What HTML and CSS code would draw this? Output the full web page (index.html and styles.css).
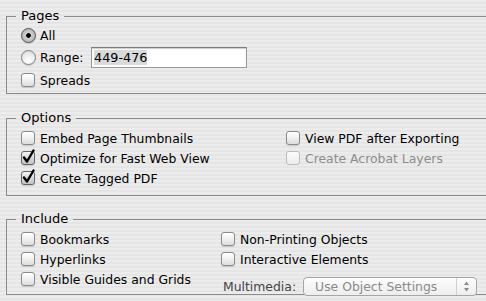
FILE: index.html
```html
<!DOCTYPE html>
<html lang="en">
<head>
    <meta charset="UTF-8">
    <meta name="viewport" content="width=device-width, initial-scale=1.0">
    <title>Export PDF - General</title>
    <link rel="stylesheet" href="styles.css">
</head>
<body>

    <fieldset class="panel panel-pages">
        <legend>Pages</legend>
        <div class="row row-all"><span class="radio on"></span>All</div>
        <div class="row row-range">
            <span class="radio"></span><span class="range-label">Range:</span>
            <span class="field"><span class="sel">449-476</span></span>
        </div>
        <div class="row row-spreads"><span class="box"></span>Spreads</div>
    </fieldset>

    <fieldset class="panel panel-options">
        <legend>Options</legend>
        <div class="cols cols-options">
            <div class="col">
                <div class="row"><span class="box"></span>Embed Page Thumbnails</div>
                <div class="row">
                    <span class="box on">
                        <svg viewBox="0 0 14 16" width="14" height="16"><path d="M3 8.5 L6 12.5 L12.5 1.5" fill="none" stroke="#000" stroke-width="2.4" stroke-linecap="round" stroke-linejoin="round"/></svg>
                    </span>Optimize for Fast Web View
                </div>
                <div class="row">
                    <span class="box on">
                        <svg viewBox="0 0 14 16" width="14" height="16"><path d="M3 8.5 L6 12.5 L12.5 1.5" fill="none" stroke="#000" stroke-width="2.4" stroke-linecap="round" stroke-linejoin="round"/></svg>
                    </span>Create Tagged PDF
                </div>
            </div>
            <div class="col">
                <div class="row"><span class="box"></span>View PDF after Exporting</div>
                <div class="row off"><span class="box"></span>Create Acrobat Layers</div>
            </div>
        </div>
    </fieldset>

    <fieldset class="panel panel-include">
        <legend>Include</legend>
        <div class="cols cols-include">
            <div class="col">
                <div class="row"><span class="box"></span>Bookmarks</div>
                <div class="row"><span class="box"></span>Hyperlinks</div>
                <div class="row"><span class="box"></span>Visible Guides and Grids</div>
            </div>
            <div class="col">
                <div class="row"><span class="box"></span>Non-Printing Objects</div>
                <div class="row"><span class="box"></span>Interactive Elements</div>
                <div class="media">
                    <span class="media-label">Multimedia:</span>
                    <span class="popup">
                        <span class="popup-text">Use Object Settings</span>
                        <span class="popup-arrows">
                            <svg viewBox="0 0 7 11" width="7" height="11"><path d="M3.5 0.5 L6 4 L1 4 Z M3.5 10.5 L6 7 L1 7 Z" fill="#8a8a8a"/></svg>
                        </span>
                    </span>
                </div>
            </div>
        </div>
    </fieldset>

</body>
</html>
```

FILE: styles.css
```css
body {
    margin: 0;
    height: 301px;
    overflow: hidden;
    font-family: "DejaVu Sans", "Liberation Sans", sans-serif;
    font-size: 12.4px;
    color: #000;
    background: repeating-linear-gradient(to bottom, #ececec 0, #ececec 2px, #e5e5e5 2px, #e5e5e5 4px);
}
.panel {
    margin: 0 0 0 6px;
    padding: 2px 0 0 14px;
    border: 1px solid #8b8b8b;
    border-right: none;
    min-inline-size: 0;
}
.panel legend {
    margin-left: -5px;
    padding: 0 5px;
    line-height: 16px;
    font-size: 13px;
}
.panel-pages {
    margin-top: 8px;
    padding-top: 0;
    padding-bottom: 2px;
}
.panel-options {
    margin-top: 16px;
    padding-bottom: 7px;
}
.panel-include {
    margin-top: 15px;
    height: 80px;
}
.row {
    display: flex;
    align-items: center;
    height: 20px;
    white-space: nowrap;
}
.row-all, .row-spreads {
    height: 22px;
}
.row-range {
    height: 23px;
}
.row.off {
    color: #8c8c8c;
}
.range-label {
    width: 51px;
}
.cols {
    display: flex;
}
.cols-options .col:first-child {
    width: 265px;
}
.cols-include .col:first-child {
    width: 200px;
}

/* checkbox */
.box {
    position: relative;
    box-sizing: border-box;
    width: 14px;
    height: 14px;
    margin-right: 5px;
    border: 1px solid #8a8a8a;
    border-radius: 3px;
    background: linear-gradient(to bottom, #ffffff 0%, #f2f2f2 45%, #dcdcdc 100%);
    box-shadow: 0 1px 1px rgba(0, 0, 0, 0.15);
    flex: none;
}
.box.on {
    background: linear-gradient(to bottom, #f4f4f4 0%, #d8d8d8 50%, #c4c4c4 100%);
    border-color: #666;
}
.box svg {
    position: absolute;
    left: -1px;
    top: -3px;
}
.off .box {
    border-color: #bcbcbc;
    box-shadow: none;
    background: linear-gradient(to bottom, #fbfbfb, #ececec);
}

/* radio */
.radio {
    box-sizing: border-box;
    width: 15px;
    height: 15px;
    margin-right: 4px;
    border: 1px solid #7f7f7f;
    border-radius: 50%;
    background: radial-gradient(circle at 50% 75%, #ffffff 0, #f0f0f0 45%, #d4d4d4 100%);
    box-shadow: 0 1px 1px rgba(0, 0, 0, 0.15);
    flex: none;
}
.radio.on {
    border-color: #555;
    background: radial-gradient(circle at 50% 50%, #000 0, #000 2px, #cfcfcf 2.6px, #a8a8a8 100%);
}

/* text field */
.field {
    box-sizing: border-box;
    width: 156px;
    height: 21px;
    padding: 2px 0 0 2px;
    border: 1px solid #9a9a9a;
    border-top-color: #7c7c7c;
    background: #fff;
    box-shadow: inset 0 1px 1px rgba(0, 0, 0, 0.2);
    font-size: 12.8px;
    line-height: 16px;
}
.sel {
    background: #dadada;
}

/* popup menu */
.media {
    display: flex;
    align-items: center;
    margin-top: 8px;
    margin-left: 2px;
    color: #444;
}
.popup {
    display: flex;
    align-items: center;
    box-sizing: border-box;
    width: 174px;
    height: 19px;
    margin-left: 7px;
    border: 1px solid #a6a6a6;
    border-radius: 4px;
    background: linear-gradient(to bottom, #fdfdfd, #ededed);
    color: #8a8a8a;
}
.popup-text {
    flex: 1;
    padding-left: 11px;
}
.popup-arrows {
    display: flex;
    align-items: center;
    justify-content: center;
    width: 19px;
    height: 100%;
    border-left: 1px solid #d0d0d0;
}
```
